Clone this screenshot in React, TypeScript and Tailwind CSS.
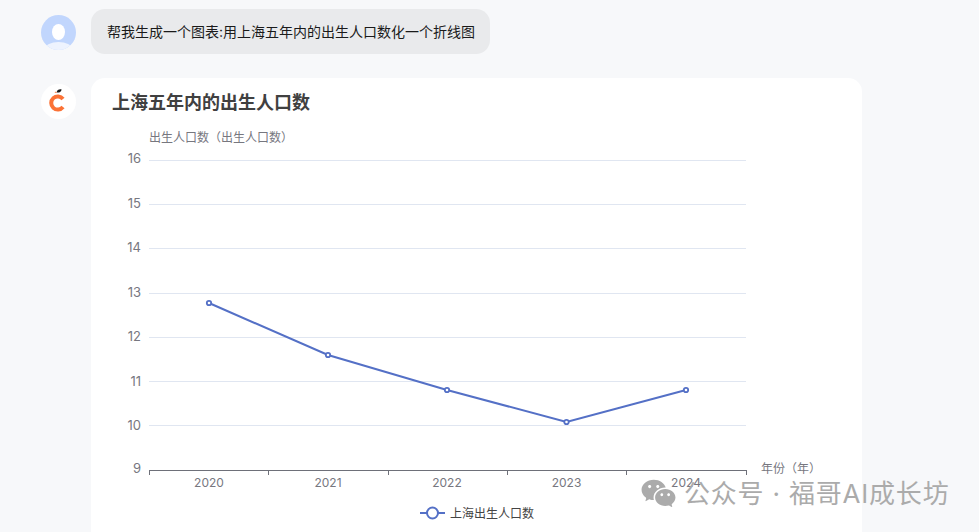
import { RiWechatFill } from "react-icons/ri";

const font = "font-['Inter','Noto_Sans_CJK_SC',sans-serif]";

const gridLines = [
  { label: "16", y: 160.5, textY: 163 },
  { label: "15", y: 204.5, textY: 207.5 },
  { label: "14", y: 248.5, textY: 252 },
  { label: "13", y: 293.5, textY: 296.5 },
  { label: "12", y: 337.5, textY: 341 },
  { label: "11", y: 381.5, textY: 385.5 },
  { label: "10", y: 425.5, textY: 429.5 },
];

const ticks = [149.5, 268.5, 388.5, 507.5, 626.5, 746.5];

const points = [
  { year: "2020", x: 209, y: 303 },
  { year: "2021", x: 328, y: 355 },
  { year: "2022", x: 447, y: 390 },
  { year: "2023", x: 566.5, y: 422 },
  { year: "2024", x: 686, y: 390 },
];

function UserAvatar() {
  return (
    <svg width="35" height="35" viewBox="0 0 35 35" className="shrink-0">
      <defs>
        <clipPath id="user-clip">
          <circle cx="17.5" cy="17.5" r="17.5" />
        </clipPath>
      </defs>
      <g clipPath="url(#user-clip)">
        <rect width="35" height="35" fill="#c1d6fd" />
        <ellipse cx="17.5" cy="17" rx="6.5" ry="8" fill="#fff" />
        <ellipse cx="17.5" cy="34" rx="13.5" ry="7" fill="#eef3fe" />
      </g>
    </svg>
  );
}

function BotAvatar() {
  return (
    <div className="flex h-[35px] w-[35px] shrink-0 items-center justify-center rounded-full bg-white">
      <svg width="35" height="35" viewBox="0 0 35 35">
        <path d="M22 14.9A6.6 6.6 0 1 0 22 23.1" fill="none" stroke="#fb7236" strokeWidth="4" />
        <path d="M15.6 8.4 C16 6.2 18 4.8 20.6 5.4 C20.4 7.6 18 9.2 15.6 8.4Z" fill="#1a1a1a" />
        <path d="M13.6 8.2 C14.4 7.4 15.4 7.6 16 8.6 C15 9 14.2 8.8 13.6 8.2Z" fill="#fb7236" />
      </svg>
    </div>
  );
}

function LineChart() {
  const line = points.map((p) => `${p.x},${p.y}`).join(" ");
  return (
    <svg width="750" height="407" viewBox="112 125 750 407" className="block">
      <text x="149" y="142" fontSize="12" fill="#77777f">出生人口数（出生人口数）</text>
      {gridLines.map((g) => (
        <g key={g.label}>
          <line x1="149" x2="746" y1={g.y} y2={g.y} stroke="#e0e6f1" />
          <text x="141" y={g.textY} textAnchor="end" fontSize="13" fill="#77777f">{g.label}</text>
        </g>
      ))}
      <text x="141" y="473" textAnchor="end" fontSize="13" fill="#77777f">9</text>
      <line x1="149" x2="747" y1="470.5" y2="470.5" stroke="#6e7079" />
      {ticks.map((x) => (
        <line key={x} x1={x} x2={x} y1="470" y2="475" stroke="#6e7079" />
      ))}
      {points.map((p) => (
        <text key={p.year} x={p.x} y="487" textAnchor="middle" fontSize="12" fill="#77777f">{p.year}</text>
      ))}
      <text x="761" y="473" fontSize="12" fill="#77777f">年份（年）</text>
      <polyline points={line} fill="none" stroke="#5470c6" strokeWidth="2" />
      {points.map((p) => (
        <circle key={p.year} cx={p.x} cy={p.y} r="2.2" fill="#fff" stroke="#5470c6" strokeWidth="1.8" />
      ))}
      <line x1="420" x2="445" y1="513" y2="513" stroke="#5470c6" strokeWidth="2" />
      <circle cx="432.5" cy="513" r="5.5" fill="#fff" stroke="#5470c6" strokeWidth="2" />
      <text x="450" y="517.5" fontSize="12" fill="#444">上海出生人口数</text>
    </svg>
  );
}

export default function App() {
  return (
    <div className={`relative h-[532px] w-[979px] overflow-hidden bg-[#f7f8fa] ${font}`}>
      <div className="flex flex-col gap-[24px] pl-[41px] pt-[9px]">
        <div className="flex gap-[15px]">
          <div className="pt-[6px]">
            <UserAvatar />
          </div>
          <div className="flex h-[45px] w-[399px] items-center rounded-[14px] bg-[#e9eaec] pl-[16px] text-[14px] text-[#1a1a1a]">
            帮我生成一个图表:用上海五年内的出生人口数化一个折线图
          </div>
        </div>
        <div className="flex gap-[15px]">
          <div className="pt-[6px]">
            <BotAvatar />
          </div>
          <div className="w-[771px] rounded-t-[14px] bg-white pl-[21px]">
            <h1 className="pt-[11px] text-[18px] font-bold leading-[28px] text-[#404040]">上海五年内的出生人口数</h1>
            <div className="pt-[8px]">
              <LineChart />
            </div>
          </div>
        </div>
      </div>
      <div className="absolute left-[640px] top-[475px] flex items-center gap-[7px] text-[#ababab]">
        <RiWechatFill className="h-[37px] w-[37px]" />
        <span className="text-[26px] leading-[36px] tracking-[0.8px]">公众号 · 福哥AI成长坊</span>
      </div>
    </div>
  );
}
